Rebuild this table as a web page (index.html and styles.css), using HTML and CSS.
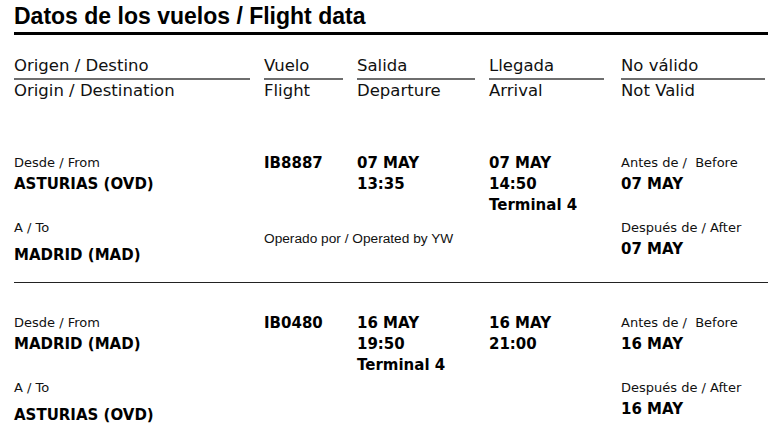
FILE: index.html
```html
<!DOCTYPE html>
<html lang="es">
<head>
<meta charset="utf-8">
<title>Datos de los vuelos / Flight data</title>
<link rel="stylesheet" href="styles.css">
</head>
<body>
<div class="page">
  <h1 class="title">Datos de los vuelos / Flight data</h1>

  <div class="grid head">
    <div class="hcell"><div class="es">Origen / Destino</div><div class="en">Origin / Destination</div></div>
    <div class="hcell"><div class="es">Vuelo</div><div class="en">Flight</div></div>
    <div class="hcell"><div class="es">Salida</div><div class="en">Departure</div></div>
    <div class="hcell"><div class="es">Llegada</div><div class="en">Arrival</div></div>
    <div class="hcell last"><div class="es">No válido</div><div class="en">Not Valid</div></div>
  </div>

  <div class="flights">
    <div class="grid row">
      <div class="cell">
        <div class="lbl">Desde / From</div>
        <div class="val">ASTURIAS (OVD)</div>
        <div class="lbl gap-to">A / To</div>
        <div class="val gap-dest">MADRID (MAD)</div>
      </div>
      <div class="cell">
        <div class="val">IB8887</div>
        <div class="op">Operado por / Operated by YW</div>
      </div>
      <div class="cell">
        <div class="val">07 MAY</div>
        <div class="val">13:35</div>
      </div>
      <div class="cell">
        <div class="val">07 MAY</div>
        <div class="val">14:50</div>
        <div class="val">Terminal 4</div>
      </div>
      <div class="cell">
        <div class="lbl">Antes de /&nbsp; Before</div>
        <div class="val">07 MAY</div>
        <div class="lbl gap-to">Después de / After</div>
        <div class="val">07 MAY</div>
      </div>
    </div>

    <div class="grid row">
      <div class="cell">
        <div class="lbl">Desde / From</div>
        <div class="val">MADRID (MAD)</div>
        <div class="lbl gap-to">A / To</div>
        <div class="val gap-dest">ASTURIAS (OVD)</div>
      </div>
      <div class="cell">
        <div class="val">IB0480</div>
      </div>
      <div class="cell">
        <div class="val">16 MAY</div>
        <div class="val">19:50</div>
        <div class="val">Terminal 4</div>
      </div>
      <div class="cell">
        <div class="val">16 MAY</div>
        <div class="val">21:00</div>
      </div>
      <div class="cell">
        <div class="lbl">Antes de /&nbsp; Before</div>
        <div class="val">16 MAY</div>
        <div class="lbl gap-to">Después de / After</div>
        <div class="val">16 MAY</div>
      </div>
    </div>
  </div>
</div>
</body>
</html>
```

FILE: styles.css
```css
html, body {
  margin: 0;
  padding: 0;
  background: #fff;
}

body {
  font-family: "DejaVu Sans", Verdana, sans-serif;
  color: #000;
  overflow: hidden;
}

.page {
  padding-left: 14px;
}

.title {
  margin: 0;
  padding: 2px 0 2px;
  font-family: "Liberation Sans", Arial, sans-serif;
  font-weight: bold;
  font-size: 23px;
  line-height: 28px;
  border-bottom: 3px solid #000;
}

.grid {
  display: grid;
  grid-template-columns: 250px 93px 132px 132px 147px;
}

.head {
  margin-top: 21px;
}

.hcell {
  padding-right: 14px;
  font-size: 16.5px;
  line-height: 20px;
  color: #111;
}

.hcell:nth-child(4) {
  padding-right: 17px;
}

.hcell.last {
  padding-right: 3px;
}

.hcell .es {
  padding-bottom: 2px;
  border-bottom: 2px solid #6e6e6e;
}

.hcell .en {
  padding-top: 1px;
}

.flights {
  margin-top: 22px;
}

.row {
  padding: 29px 0 17px;
  border-bottom: 1px solid #222;
}

.cell {
  line-height: 21px;
}

.lbl {
  font-size: 13px;
  color: #111;
}

.val {
  padding-top: 2px;
  font-size: 15px;
  line-height: 19px;
  font-weight: bold;
}

.gap-to {
  margin-top: 23px;
}

.gap-dest {
  margin-top: 6px;
}

.op {
  margin-top: 55px;
  font-family: "Liberation Sans", Arial, sans-serif;
  font-size: 13.7px;
  white-space: nowrap;
  color: #111;
}
```
